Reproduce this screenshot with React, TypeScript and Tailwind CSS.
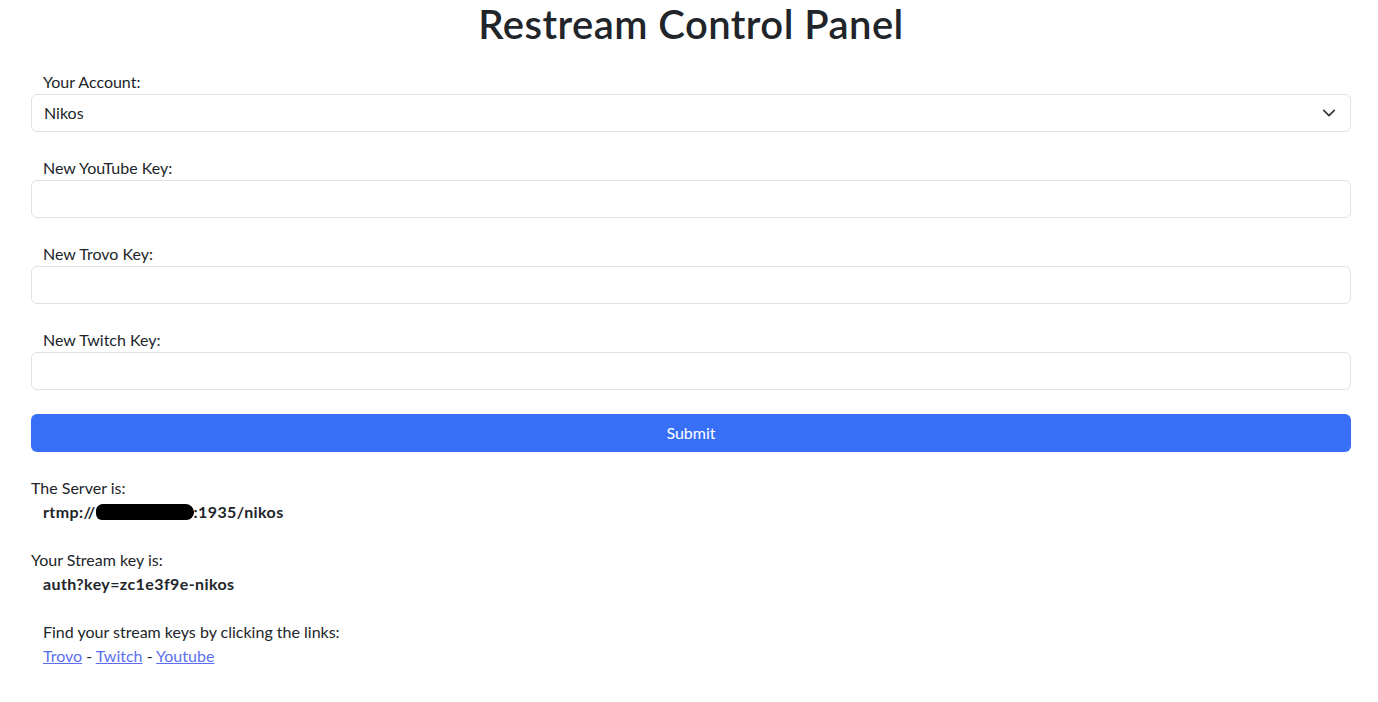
import React from "react";

function Field({ label, children }: { label: string; children: React.ReactNode }) {
  return (
    <div className="flex flex-col">
      <label className="pl-3 leading-6">{label}</label>
      {children}
    </div>
  );
}

function TextInput() {
  return <input type="text" className="h-[38px] w-full rounded-[6px] border border-[#dee2e6] bg-white px-3 outline-none" />;
}

export default function App() {
  return (
    <div className="min-h-[702px] bg-white text-[16px] text-[#212529]" style={{ fontFamily: "Lato, 'Noto Sans', sans-serif" }}>
      <div className="pl-[31px] pr-[27px]">
        <h1 className="text-center text-[40px] font-semibold leading-[48px] tracking-[0.45px]">Restream Control Panel</h1>
        <form className="mt-[22px] flex flex-col gap-6" onSubmit={(e) => e.preventDefault()}>
          <Field label="Your Account:">
            <div className="flex h-[38px] w-full items-center justify-between rounded-[6px] border border-[#dee2e6] bg-white pl-3 pr-[14px]">
              <span>Nikos</span>
              <svg width="14" height="14" viewBox="0 0 16 16" fill="none" stroke="#343a40" strokeWidth="2" strokeLinecap="round" strokeLinejoin="round">
                <path d="M2 5l6 6 6-6" />
              </svg>
            </div>
          </Field>
          <Field label="New YouTube Key:">
            <TextInput />
          </Field>
          <Field label="New Trovo Key:">
            <TextInput />
          </Field>
          <Field label="New Twitch Key:">
            <TextInput />
          </Field>
          <button type="submit" className="h-[38px] w-full rounded-[6px] bg-[#3770f7] text-white">Submit</button>
        </form>
        <div className="mt-6 leading-6">
          <div>The Server is:</div>
          <div className="flex items-center pl-3 font-bold tracking-[0.4px]">
            <span>rtmp://</span>
            <span className="inline-block h-[16px] w-[98px] rounded-[8px_10px_9px_7px] bg-black" />
            <span>:1935/nikos</span>
          </div>
          <div className="mt-6">Your Stream key is:</div>
          <div className="pl-3 font-bold tracking-[0.4px]">auth?key=zc1e3f9e-nikos</div>
          <div className="mt-6 pl-3">
            <div>Find your stream keys by clicking the links:</div>
            <div>
              <a href="#" className="text-[#5b6ff2] underline">Trovo</a> - <a href="#" className="text-[#5b6ff2] underline">Twitch</a> - <a href="#" className="text-[#5b6ff2] underline">Youtube</a>
            </div>
          </div>
        </div>
      </div>
    </div>
  );
}
